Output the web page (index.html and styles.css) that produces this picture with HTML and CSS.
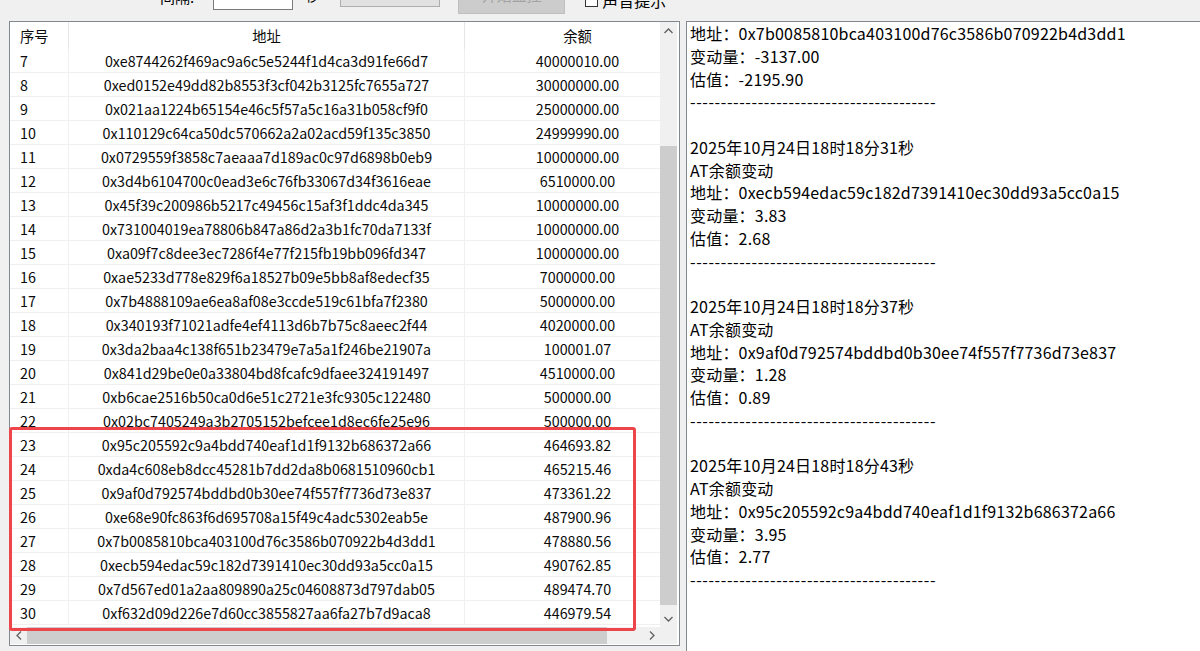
FILE: index.html
```html
<!DOCTYPE html>
<html lang="zh-CN">
<head>
<meta charset="utf-8">
<title>AT余额监控</title>
<link rel="stylesheet" href="styles.css">
</head>
<body>
<div class="toolbar">
  <span class="lbl">间隔:</span>
  <span class="input">30</span>
  <span class="unit">秒</span>
  <span class="btn btn1">停止监控</span>
  <span class="btn btn2">开始监控</span>
  <span class="chk"></span>
  <span class="chklbl">声音提示</span>
</div>
<div class="main">
  <div class="grid-panel">
    <div class="viewport">
      <div class="table">
        <div class="row head"><div class="c c1">序号</div><div class="c c2">地址</div><div class="c c3">余额</div></div>
        <div class="row"><div class="c c1">7</div><div class="c c2">0xe8744262f469ac9a6c5e5244f1d4ca3d91fe66d7</div><div class="c c3">40000010.00</div></div>
        <div class="row"><div class="c c1">8</div><div class="c c2">0xed0152e49dd82b8553f3cf042b3125fc7655a727</div><div class="c c3">30000000.00</div></div>
        <div class="row"><div class="c c1">9</div><div class="c c2">0x021aa1224b65154e46c5f57a5c16a31b058cf9f0</div><div class="c c3">25000000.00</div></div>
        <div class="row"><div class="c c1">10</div><div class="c c2">0x110129c64ca50dc570662a2a02acd59f135c3850</div><div class="c c3">24999990.00</div></div>
        <div class="row"><div class="c c1">11</div><div class="c c2">0x0729559f3858c7aeaaa7d189ac0c97d6898b0eb9</div><div class="c c3">10000000.00</div></div>
        <div class="row"><div class="c c1">12</div><div class="c c2">0x3d4b6104700c0ead3e6c76fb33067d34f3616eae</div><div class="c c3">6510000.00</div></div>
        <div class="row"><div class="c c1">13</div><div class="c c2">0x45f39c200986b5217c49456c15af3f1ddc4da345</div><div class="c c3">10000000.00</div></div>
        <div class="row"><div class="c c1">14</div><div class="c c2">0x731004019ea78806b847a86d2a3b1fc70da7133f</div><div class="c c3">10000000.00</div></div>
        <div class="row"><div class="c c1">15</div><div class="c c2">0xa09f7c8dee3ec7286f4e77f215fb19bb096fd347</div><div class="c c3">10000000.00</div></div>
        <div class="row"><div class="c c1">16</div><div class="c c2">0xae5233d778e829f6a18527b09e5bb8af8edecf35</div><div class="c c3">7000000.00</div></div>
        <div class="row"><div class="c c1">17</div><div class="c c2">0x7b4888109ae6ea8af08e3ccde519c61bfa7f2380</div><div class="c c3">5000000.00</div></div>
        <div class="row"><div class="c c1">18</div><div class="c c2">0x340193f71021adfe4ef4113d6b7b75c8aeec2f44</div><div class="c c3">4020000.00</div></div>
        <div class="row"><div class="c c1">19</div><div class="c c2">0x3da2baa4c138f651b23479e7a5a1f246be21907a</div><div class="c c3">100001.07</div></div>
        <div class="row"><div class="c c1">20</div><div class="c c2">0x841d29be0e0a33804bd8fcafc9dfaee324191497</div><div class="c c3">4510000.00</div></div>
        <div class="row"><div class="c c1">21</div><div class="c c2">0xb6cae2516b50ca0d6e51c2721e3fc9305c122480</div><div class="c c3">500000.00</div></div>
        <div class="row"><div class="c c1">22</div><div class="c c2">0x02bc7405249a3b2705152befcee1d8ec6fe25e96</div><div class="c c3">500000.00</div></div>
        <div class="row"><div class="c c1">23</div><div class="c c2">0x95c205592c9a4bdd740eaf1d1f9132b686372a66</div><div class="c c3">464693.82</div></div>
        <div class="row"><div class="c c1">24</div><div class="c c2">0xda4c608eb8dcc45281b7dd2da8b0681510960cb1</div><div class="c c3">465215.46</div></div>
        <div class="row"><div class="c c1">25</div><div class="c c2">0x9af0d792574bddbd0b30ee74f557f7736d73e837</div><div class="c c3">473361.22</div></div>
        <div class="row"><div class="c c1">26</div><div class="c c2">0xe68e90fc863f6d695708a15f49c4adc5302eab5e</div><div class="c c3">487900.96</div></div>
        <div class="row"><div class="c c1">27</div><div class="c c2">0x7b0085810bca403100d76c3586b070922b4d3dd1</div><div class="c c3">478880.56</div></div>
        <div class="row"><div class="c c1">28</div><div class="c c2">0xecb594edac59c182d7391410ec30dd93a5cc0a15</div><div class="c c3">490762.85</div></div>
        <div class="row"><div class="c c1">29</div><div class="c c2">0x7d567ed01a2aa809890a25c04608873d797dab05</div><div class="c c3">489474.70</div></div>
        <div class="row"><div class="c c1">30</div><div class="c c2">0xf632d09d226e7d60cc3855827aa6fa27b7d9aca8</div><div class="c c3">446979.54</div></div>
      </div>
    </div>
    <div class="vscroll">
      <div class="arrow"><svg width="9" height="6" viewBox="0 0 9 6"><polyline points="0.5,5 4.5,1 8.5,5" fill="none" stroke="#606060" stroke-width="1.3"/></svg></div>
      <div class="vtrack"><div class="vspace"></div><div class="vthumb"></div></div>
      <div class="arrow"><svg width="9" height="6" viewBox="0 0 9 6"><polyline points="0.5,1 4.5,5 8.5,1" fill="none" stroke="#606060" stroke-width="1.3"/></svg></div>
    </div>
    <div class="hscroll">
      <div class="arrow"><svg width="6" height="9" viewBox="0 0 6 9"><polyline points="5,0.5 1,4.5 5,8.5" fill="none" stroke="#606060" stroke-width="1.3"/></svg></div>
      <div class="htrack"><div class="hthumb"></div></div>
      <div class="arrow"><svg width="6" height="9" viewBox="0 0 6 9"><polyline points="1,0.5 5,4.5 1,8.5" fill="none" stroke="#606060" stroke-width="1.3"/></svg></div>
    </div>
    <div class="corner"></div>
    <div class="mark"></div>
  </div>
  <div class="log">
    <div class="ln">地址：0x7b0085810bca403100d76c3586b070922b4d3dd1</div>
    <div class="ln">变动量：-3137.00</div>
    <div class="ln">估值：-2195.90</div>
    <div class="ln sep">----------------------------------------</div>
    <div class="ln">&nbsp;</div>
    <div class="ln">2025年10月24日18时18分31秒</div>
    <div class="ln">AT余额变动</div>
    <div class="ln">地址：0xecb594edac59c182d7391410ec30dd93a5cc0a15</div>
    <div class="ln">变动量：3.83</div>
    <div class="ln">估值：2.68</div>
    <div class="ln sep">----------------------------------------</div>
    <div class="ln">&nbsp;</div>
    <div class="ln">2025年10月24日18时18分37秒</div>
    <div class="ln">AT余额变动</div>
    <div class="ln">地址：0x9af0d792574bddbd0b30ee74f557f7736d73e837</div>
    <div class="ln">变动量：1.28</div>
    <div class="ln">估值：0.89</div>
    <div class="ln sep">----------------------------------------</div>
    <div class="ln">&nbsp;</div>
    <div class="ln">2025年10月24日18时18分43秒</div>
    <div class="ln">AT余额变动</div>
    <div class="ln">地址：0x95c205592c9a4bdd740eaf1d1f9132b686372a66</div>
    <div class="ln">变动量：3.95</div>
    <div class="ln">估值：2.77</div>
    <div class="ln sep">----------------------------------------</div>
  </div>
</div>
</body>
</html>
```
FILE: styles.css
```css
html, body {
  margin: 0;
  padding: 0;
}
body {
  width: 1200px;
  height: 651px;
  overflow: hidden;
  background: #f0f0f0;
  font-family: "Noto Sans CJK SC", "Noto Sans", sans-serif;
  color: #000;
}

/* top controls (cut off by the top edge) */
.toolbar {
  display: flex;
  align-items: flex-start;
  height: 21px;
  overflow: visible;
}
.lbl {
  margin-left: 160px;
  margin-top: -11px;
  font-size: 15px;
  line-height: 16px;
}
.input {
  margin-left: 19px;
  margin-top: -14px;
  width: 80px;
  height: 24px;
  box-sizing: border-box;
  border: 1px solid #7a7a7a;
  background: #fff;
  padding-left: 3px;
  font-size: 15px;
  line-height: 12px;
}
.unit {
  margin-left: 12px;
  margin-top: -12px;
  font-size: 14px;
  line-height: 14px;
}
.btn {
  box-sizing: border-box;
  height: 30px;
  display: flex;
  justify-content: center;
  font-size: 15px;
  line-height: 16px;
}
.btn1 {
  margin-left: 21px;
  margin-top: -23px;
  width: 100px;
  background: #e1e1e1;
  border: 1px solid #adadad;
  color: transparent;
}
.btn2 {
  margin-left: 18px;
  margin-top: -16px;
  width: 107px;
  background: #cccccc;
  border: 1px solid #bfbfbf;
  color: #a3a3a3;
  padding-top: 2px;
}
.chk {
  margin-left: 20px;
  margin-top: -6px;
  width: 13px;
  height: 13px;
  box-sizing: border-box;
  border: 1px solid #333;
  background: #fff;
}
.chklbl {
  margin-left: 4px;
  margin-top: -8px;
  font-size: 16px;
  line-height: 16px;
}

/* main area */
.main {
  display: flex;
  align-items: flex-start;
}
.grid-panel {
  position: relative;
  margin-left: 9px;
  width: 671px;
  height: 625px;
  box-sizing: border-box;
  border: 1px solid #828790;
  padding: 0 2px 1px 0;
  background: #fff;
  display: grid;
  grid-template-columns: 650px 17px;
  grid-template-rows: 605px 17px;
}
.viewport {
  overflow: hidden;
  background: #fff;
}
.table {
  width: 681px;
  font-size: 14.3px;
  color: #0a0a0a;
}
.row {
  display: grid;
  grid-template-columns: 59px 396px 226px;
  height: 24px;
  box-sizing: border-box;
  border-bottom: 1px solid #f0f0f0;
  line-height: 23px;
}
.row.head {
  height: 27px;
  line-height: 28px;
  border-bottom: none;
}
.c {
  white-space: nowrap;
  overflow: hidden;
  border-right: 1px solid #f0f0f0;
}
.c1 {
  padding-left: 10px;
}
.c2, .c3 {
  text-align: center;
}
.head .c {
  border-right-color: #e5e5e5;
}

/* scrollbars */
.vscroll {
  display: flex;
  flex-direction: column;
  background: #f0f0f0;
}
.arrow {
  flex: none;
  width: 17px;
  height: 17px;
  display: flex;
  align-items: center;
  justify-content: center;
}
.vtrack {
  flex: 1;
  display: flex;
  flex-direction: column;
}
.vspace {
  height: 107px;
}
.vthumb {
  height: 459px;
  background: #cdcdcd;
}
.hscroll {
  display: flex;
  background: #f0f0f0;
}
.htrack {
  flex: 1;
  display: flex;
  align-items: stretch;
}
.hthumb {
  width: 580px;
  background: #cdcdcd;
}
.corner {
  background: #f0f0f0;
}

/* red annotation overlay */
.mark {
  position: absolute;
  left: -1px;
  top: 405px;
  width: 627px;
  height: 204px;
  box-sizing: border-box;
  border: 3px solid #ee454b;
  border-radius: 3px;
  pointer-events: none;
}

/* right log panel */
.log {
  margin-left: 6px;
  width: 530px;
  height: 632px;
  box-sizing: border-box;
  border: 1px solid #828790;
  background: #fff;
  padding: 0 0 0 3px;
  font-size: 16px;
  flex: none;
}
.ln {
  height: 22.75px;
  line-height: 22.75px;
  white-space: nowrap;
  letter-spacing: 0.2px;
}
.sep {
  letter-spacing: 0.6px;
}
```
